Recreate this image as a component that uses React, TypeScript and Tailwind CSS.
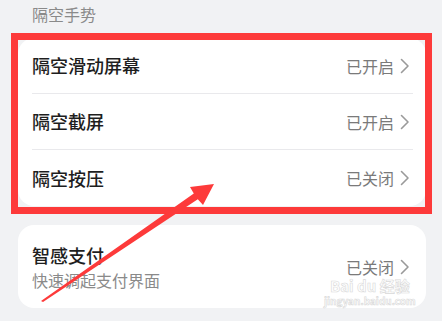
const font = { fontFamily: '"Noto Sans CJK SC", "Noto Sans", sans-serif' };

function Chevron() {
  return (
    <svg width="10" height="16" viewBox="0 0 10 16" fill="none" className="ml-[6px]">
      <path d="M1.5 1.5L8 8l-6.5 6.5" stroke="#9a9a9a" strokeWidth="1.6" strokeLinecap="round" strokeLinejoin="round" />
    </svg>
  );
}

function Row({ title, value, last }: { title: string; value: string; last?: boolean }) {
  return (
    <div className="flex h-[56px] items-center justify-between pl-[14px] pr-[13px]">
      <div
        className={`flex h-full flex-1 items-center justify-between pr-[3px] ${last ? "" : "border-b border-[#e9e9ec]"}`}
      >
        <span className="text-[18px] font-medium text-[#1e1e1e]">{title}</span>
        <span className="flex items-center text-[16px] text-[#7a7a7a]">
          {value}
          <Chevron />
        </span>
      </div>
    </div>
  );
}

export default function App() {
  return (
    <div className="relative h-[321px] w-[442px] overflow-hidden bg-[#f1f2f4]" style={font}>
      <div className="flex flex-col pl-[18px] pr-[16px] pt-[4px]">
        <div className="pl-[14px] text-[16px] leading-[20px] text-[#8a8a8a]">隔空手势</div>

        <div className="mt-[14px] overflow-hidden rounded-[16px] bg-white">
          <Row title="隔空滑动屏幕" value="已开启" />
          <Row title="隔空截屏" value="已开启" />
          <Row title="隔空按压" value="已关闭" last />
        </div>

        <div className="mt-[19px] flex h-[83px] items-center justify-between rounded-[16px] bg-white pl-[14px] pr-[16px]">
          <div className="flex flex-col gap-[3px]">
            <span className="text-[18px] font-medium leading-[24px] text-[#1e1e1e]">智感支付</span>
            <span className="text-[16px] leading-[20px] text-[#8a8a8a]">快速调起支付界面</span>
          </div>
          <span className="flex items-center text-[16px] text-[#7a7a7a]">
            已关闭
            <Chevron />
          </span>
        </div>
      </div>

      {/* annotation frame */}
      <div className="pointer-events-none absolute left-[11px] top-[33px] h-[181px] w-[421px] border-[7px] border-[#fd3a3a]" />

      {/* annotation arrow */}
      <svg className="pointer-events-none absolute left-0 top-0" width="442" height="321" viewBox="0 0 442 321">
        <polygon
          points="41,301 193.8,193.5 190,187 214,184 203,205 197.8,199.3 43,302"
          fill="#fd3a3a"
        />
      </svg>

      {/* watermark */}
      <div className="pointer-events-none absolute left-[324px] top-[278px] flex flex-col items-center whitespace-nowrap leading-none text-white [-webkit-text-stroke:0.6px_#d8d8d8]">
        <span className="text-[15px] font-bold">Bai du 经验</span>
        <span className="mt-[3px] text-[10px] font-bold">jingyan.baidu.com</span>
      </div>
    </div>
  );
}
